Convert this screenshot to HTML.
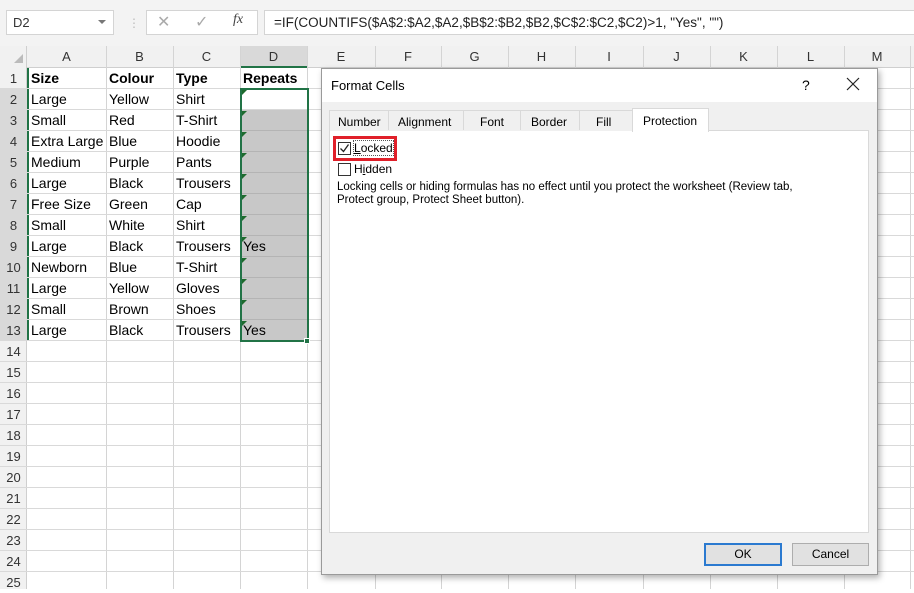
<!DOCTYPE html>
<html><head><meta charset="utf-8"><style>
*{margin:0;padding:0;box-sizing:border-box}
body{width:914px;height:589px;overflow:hidden;background:#fff;font-family:"Liberation Sans",Arial,sans-serif;position:relative}
.a{position:absolute}
.t{position:absolute;font-size:14px;color:#000;white-space:nowrap;line-height:21px}
.h{position:absolute;font-size:13px;color:#333;text-align:center;line-height:21px}
.d{font-size:12px;color:#000;position:absolute;white-space:nowrap}
</style></head><body>
<div class="a" style="left:0;top:0;width:914px;height:46px;background:#f3f3f3"></div>
<div class="a" style="left:6px;top:10px;width:108px;height:25px;background:#fff;border:1px solid #d4d4d4"></div>
<div class="t" style="left:13px;top:12px;font-size:13px;color:#333">D2</div>
<div class="a" style="left:98px;top:20px;width:0;height:0;border-left:4px solid transparent;border-right:4px solid transparent;border-top:4px solid #777"></div>
<div class="a" style="left:128px;top:16px;color:#bbb;font-size:12px">⋮</div>
<div class="a" style="left:146px;top:10px;width:112px;height:25px;background:#fff;border:1px solid #d4d4d4"></div>
<div class="a" style="left:157px;top:12px;color:#aaa;font-size:16px">✕</div>
<div class="a" style="left:195px;top:12px;color:#aaa;font-size:16px">✓</div>
<div class="a" style="left:233px;top:12px;color:#444;font-size:14px;font-style:italic;font-family:'Liberation Serif',serif">fx</div>
<div class="a" style="left:264px;top:10px;width:652px;height:25px;background:#fff;border:1px solid #d4d4d4"></div>
<div class="t" style="left:274px;top:12px;font-size:13.5px;color:#222">=IF(COUNTIFS($A$2:$A2,$A2,$B$2:$B2,$B2,$C$2:$C2,$C2)&gt;1, "Yes", "")</div>
<div class="a" style="left:0;top:46px;width:914px;height:22px;background:#f1f1f1;border-bottom:1px solid #cfcfcf"></div>
<div class="a" style="left:0;top:46px;width:27px;height:543px;background:#f1f1f1;border-right:1px solid #cfcfcf"></div>
<div class="a" style="left:240px;top:46px;width:67px;height:22px;background:#d9d9d9;border-bottom:2px solid #217346"></div>
<div class="a" style="left:27px;top:68px;width:2px;height:273px;background:#217346"></div>
<div class="a" style="left:0;top:89px;width:27px;height:252px;background:#d9d9d9"></div>
<div class="a" style="left:14px;top:54px;width:0;height:0;border-left:9px solid transparent;border-bottom:9px solid #bbb"></div>
<svg class="a" style="left:0;top:46px" width="914" height="543">
<g stroke="#d4d4d4" stroke-width="1">
<line x1="106.5" y1="0" x2="106.5" y2="543"/><line x1="173.5" y1="0" x2="173.5" y2="543"/><line x1="240.5" y1="0" x2="240.5" y2="543"/><line x1="307.5" y1="0" x2="307.5" y2="543"/><line x1="375.5" y1="0" x2="375.5" y2="543"/><line x1="441.5" y1="0" x2="441.5" y2="543"/><line x1="508.5" y1="0" x2="508.5" y2="543"/><line x1="575.5" y1="0" x2="575.5" y2="543"/><line x1="643.5" y1="0" x2="643.5" y2="543"/><line x1="710.5" y1="0" x2="710.5" y2="543"/><line x1="777.5" y1="0" x2="777.5" y2="543"/><line x1="844.5" y1="0" x2="844.5" y2="543"/><line x1="910.5" y1="0" x2="910.5" y2="543"/>
</g>
<g stroke="#d9d9d9">
<line x1="0" y1="42.5" x2="914" y2="42.5"/><line x1="0" y1="63.5" x2="914" y2="63.5"/><line x1="0" y1="84.5" x2="914" y2="84.5"/><line x1="0" y1="105.5" x2="914" y2="105.5"/><line x1="0" y1="126.5" x2="914" y2="126.5"/><line x1="0" y1="147.5" x2="914" y2="147.5"/><line x1="0" y1="168.5" x2="914" y2="168.5"/><line x1="0" y1="189.5" x2="914" y2="189.5"/><line x1="0" y1="210.5" x2="914" y2="210.5"/><line x1="0" y1="231.5" x2="914" y2="231.5"/><line x1="0" y1="252.5" x2="914" y2="252.5"/><line x1="0" y1="273.5" x2="914" y2="273.5"/><line x1="0" y1="294.5" x2="914" y2="294.5"/><line x1="0" y1="315.5" x2="914" y2="315.5"/><line x1="0" y1="336.5" x2="914" y2="336.5"/><line x1="0" y1="357.5" x2="914" y2="357.5"/><line x1="0" y1="378.5" x2="914" y2="378.5"/><line x1="0" y1="399.5" x2="914" y2="399.5"/><line x1="0" y1="420.5" x2="914" y2="420.5"/><line x1="0" y1="441.5" x2="914" y2="441.5"/><line x1="0" y1="462.5" x2="914" y2="462.5"/><line x1="0" y1="483.5" x2="914" y2="483.5"/><line x1="0" y1="504.5" x2="914" y2="504.5"/><line x1="0" y1="525.5" x2="914" y2="525.5"/>
</g>
</svg>
<div class="h" style="left:27px;top:46px;width:79px">A</div><div class="h" style="left:106px;top:46px;width:67px">B</div><div class="h" style="left:173px;top:46px;width:67px">C</div><div class="h" style="left:240px;top:46px;width:67px">D</div><div class="h" style="left:307px;top:46px;width:68px">E</div><div class="h" style="left:375px;top:46px;width:66px">F</div><div class="h" style="left:441px;top:46px;width:67px">G</div><div class="h" style="left:508px;top:46px;width:67px">H</div><div class="h" style="left:575px;top:46px;width:68px">I</div><div class="h" style="left:643px;top:46px;width:67px">J</div><div class="h" style="left:710px;top:46px;width:67px">K</div><div class="h" style="left:777px;top:46px;width:67px">L</div><div class="h" style="left:844px;top:46px;width:66px">M</div>
<div class="h" style="left:0;width:27px;top:68px">1</div><div class="h" style="left:0;width:27px;top:89px">2</div><div class="h" style="left:0;width:27px;top:110px">3</div><div class="h" style="left:0;width:27px;top:131px">4</div><div class="h" style="left:0;width:27px;top:152px">5</div><div class="h" style="left:0;width:27px;top:173px">6</div><div class="h" style="left:0;width:27px;top:194px">7</div><div class="h" style="left:0;width:27px;top:215px">8</div><div class="h" style="left:0;width:27px;top:236px">9</div><div class="h" style="left:0;width:27px;top:257px">10</div><div class="h" style="left:0;width:27px;top:278px">11</div><div class="h" style="left:0;width:27px;top:299px">12</div><div class="h" style="left:0;width:27px;top:320px">13</div><div class="h" style="left:0;width:27px;top:341px">14</div><div class="h" style="left:0;width:27px;top:362px">15</div><div class="h" style="left:0;width:27px;top:383px">16</div><div class="h" style="left:0;width:27px;top:404px">17</div><div class="h" style="left:0;width:27px;top:425px">18</div><div class="h" style="left:0;width:27px;top:446px">19</div><div class="h" style="left:0;width:27px;top:467px">20</div><div class="h" style="left:0;width:27px;top:488px">21</div><div class="h" style="left:0;width:27px;top:509px">22</div><div class="h" style="left:0;width:27px;top:530px">23</div><div class="h" style="left:0;width:27px;top:551px">24</div><div class="h" style="left:0;width:27px;top:572px">25</div>
<div class="a" style="left:241px;top:110px;width:66px;height:231px;background:repeating-linear-gradient(#c8c8c8 0 20px,#b4b4b4 20px 21px)"></div>
<div class="a" style="left:240px;top:88px;width:69px;height:254px;border:2px solid #217346"></div>
<div class="a" style="left:304px;top:338px;width:6px;height:6px;background:#217346;border:1px solid #fff"></div>
<svg class="a" style="left:242px;top:90px" width="6" height="250"><g fill="#1e6b2e"><path d="M0 0h5L0 5z"/><path d="M0 21h5L0 26z"/><path d="M0 42h5L0 47z"/><path d="M0 63h5L0 68z"/><path d="M0 84h5L0 89z"/><path d="M0 105h5L0 110z"/><path d="M0 126h5L0 131z"/><path d="M0 147h5L0 152z"/><path d="M0 168h5L0 173z"/><path d="M0 189h5L0 194z"/><path d="M0 210h5L0 215z"/><path d="M0 231h5L0 236z"/></g></svg>
<div class="t" style="left:31px;top:68px;font-weight:bold">Size</div><div class="t" style="left:109px;top:68px;font-weight:bold">Colour</div><div class="t" style="left:176px;top:68px;font-weight:bold">Type</div><div class="t" style="left:243px;top:68px;font-weight:bold">Repeats</div>
<div class="t" style="left:31px;top:89px">Large</div><div class="t" style="left:109px;top:89px">Yellow</div><div class="t" style="left:176px;top:89px">Shirt</div>
<div class="t" style="left:31px;top:110px">Small</div><div class="t" style="left:109px;top:110px">Red</div><div class="t" style="left:176px;top:110px">T-Shirt</div>
<div class="t" style="left:31px;top:131px">Extra Large</div><div class="t" style="left:109px;top:131px">Blue</div><div class="t" style="left:176px;top:131px">Hoodie</div>
<div class="t" style="left:31px;top:152px">Medium</div><div class="t" style="left:109px;top:152px">Purple</div><div class="t" style="left:176px;top:152px">Pants</div>
<div class="t" style="left:31px;top:173px">Large</div><div class="t" style="left:109px;top:173px">Black</div><div class="t" style="left:176px;top:173px">Trousers</div>
<div class="t" style="left:31px;top:194px">Free Size</div><div class="t" style="left:109px;top:194px">Green</div><div class="t" style="left:176px;top:194px">Cap</div>
<div class="t" style="left:31px;top:215px">Small</div><div class="t" style="left:109px;top:215px">White</div><div class="t" style="left:176px;top:215px">Shirt</div>
<div class="t" style="left:31px;top:236px">Large</div><div class="t" style="left:109px;top:236px">Black</div><div class="t" style="left:176px;top:236px">Trousers</div><div class="t" style="left:243px;top:236px">Yes</div>
<div class="t" style="left:31px;top:257px">Newborn</div><div class="t" style="left:109px;top:257px">Blue</div><div class="t" style="left:176px;top:257px">T-Shirt</div>
<div class="t" style="left:31px;top:278px">Large</div><div class="t" style="left:109px;top:278px">Yellow</div><div class="t" style="left:176px;top:278px">Gloves</div>
<div class="t" style="left:31px;top:299px">Small</div><div class="t" style="left:109px;top:299px">Brown</div><div class="t" style="left:176px;top:299px">Shoes</div>
<div class="t" style="left:31px;top:320px">Large</div><div class="t" style="left:109px;top:320px">Black</div><div class="t" style="left:176px;top:320px">Trousers</div><div class="t" style="left:243px;top:320px">Yes</div>
<div class="a" style="left:321px;top:68px;width:557px;height:507px;background:#f0f0f0;border:1px solid #9a9a9a;box-shadow:2px 3px 6px rgba(0,0,0,.3)"></div>
<div class="a" style="left:322px;top:69px;width:555px;height:33px;background:#fff"></div>
<div class="d" style="left:331px;top:78px;font-size:13px">Format Cells</div>
<div class="d" style="left:802px;top:77px;font-size:14px">?</div>
<svg class="a" style="left:846px;top:77px" width="14" height="14"><path d="M1 1L13 13M13 1L1 13" stroke="#222" stroke-width="1.2"/></svg>
<div class="a" style="left:329px;top:130px;width:540px;height:403px;background:#fff;border:1px solid #d9d9d9"></div>
<div class="a" style="left:329px;top:110px;width:304px;height:21px;border:1px solid #d9d9d9;border-bottom:none;background:#f0f0f0"></div>
<div class="a" style="left:388px;top:110px;width:1px;height:20px;background:#d9d9d9"></div>
<div class="a" style="left:463px;top:110px;width:1px;height:20px;background:#d9d9d9"></div>
<div class="a" style="left:520px;top:110px;width:1px;height:20px;background:#d9d9d9"></div>
<div class="a" style="left:579px;top:110px;width:1px;height:20px;background:#d9d9d9"></div>
<div class="a" style="left:632px;top:108px;width:77px;height:24px;background:#fff;border:1px solid #d9d9d9;border-bottom:none"></div>
<div class="d" style="left:338px;top:115px">Number</div><div class="d" style="left:398px;top:115px">Alignment</div><div class="d" style="left:480px;top:115px">Font</div><div class="d" style="left:531px;top:115px">Border</div><div class="d" style="left:596px;top:115px">Fill</div><div class="d" style="left:643px;top:114px">Protection</div>
<div class="a" style="left:333px;top:136px;width:64px;height:25px;border:3px solid #e0202a"></div>
<div class="a" style="left:338px;top:142px;width:13px;height:13px;border:1px solid #333;background:#fff"></div>
<svg class="a" style="left:338px;top:142px" width="13" height="13"><path d="M2.5 6.5l3 3 5-7" stroke="#222" stroke-width="1.3" fill="none"/></svg>
<div class="d" style="left:354px;top:141px;outline:1px dotted #555"><u>L</u>ocked</div>
<div class="a" style="left:338px;top:163px;width:13px;height:13px;border:1px solid #333;background:#fff"></div>
<div class="d" style="left:354px;top:162px">H<u>i</u>dden</div>
<div class="d" style="left:337px;top:181px;font-size:11.5px;line-height:13px;white-space:normal;width:475px">Locking cells or hiding formulas has no effect until you protect the worksheet (Review tab, Protect group, Protect Sheet button).</div>
<div class="a" style="left:704px;top:543px;width:78px;height:23px;background:#e1e1e1;border:2px solid #2b7ad0"></div>
<div class="d" style="left:704px;top:547px;width:78px;text-align:center">OK</div>
<div class="a" style="left:792px;top:543px;width:77px;height:23px;background:#e1e1e1;border:1px solid #adadad"></div>
<div class="d" style="left:792px;top:547px;width:77px;text-align:center">Cancel</div>
</body></html>
